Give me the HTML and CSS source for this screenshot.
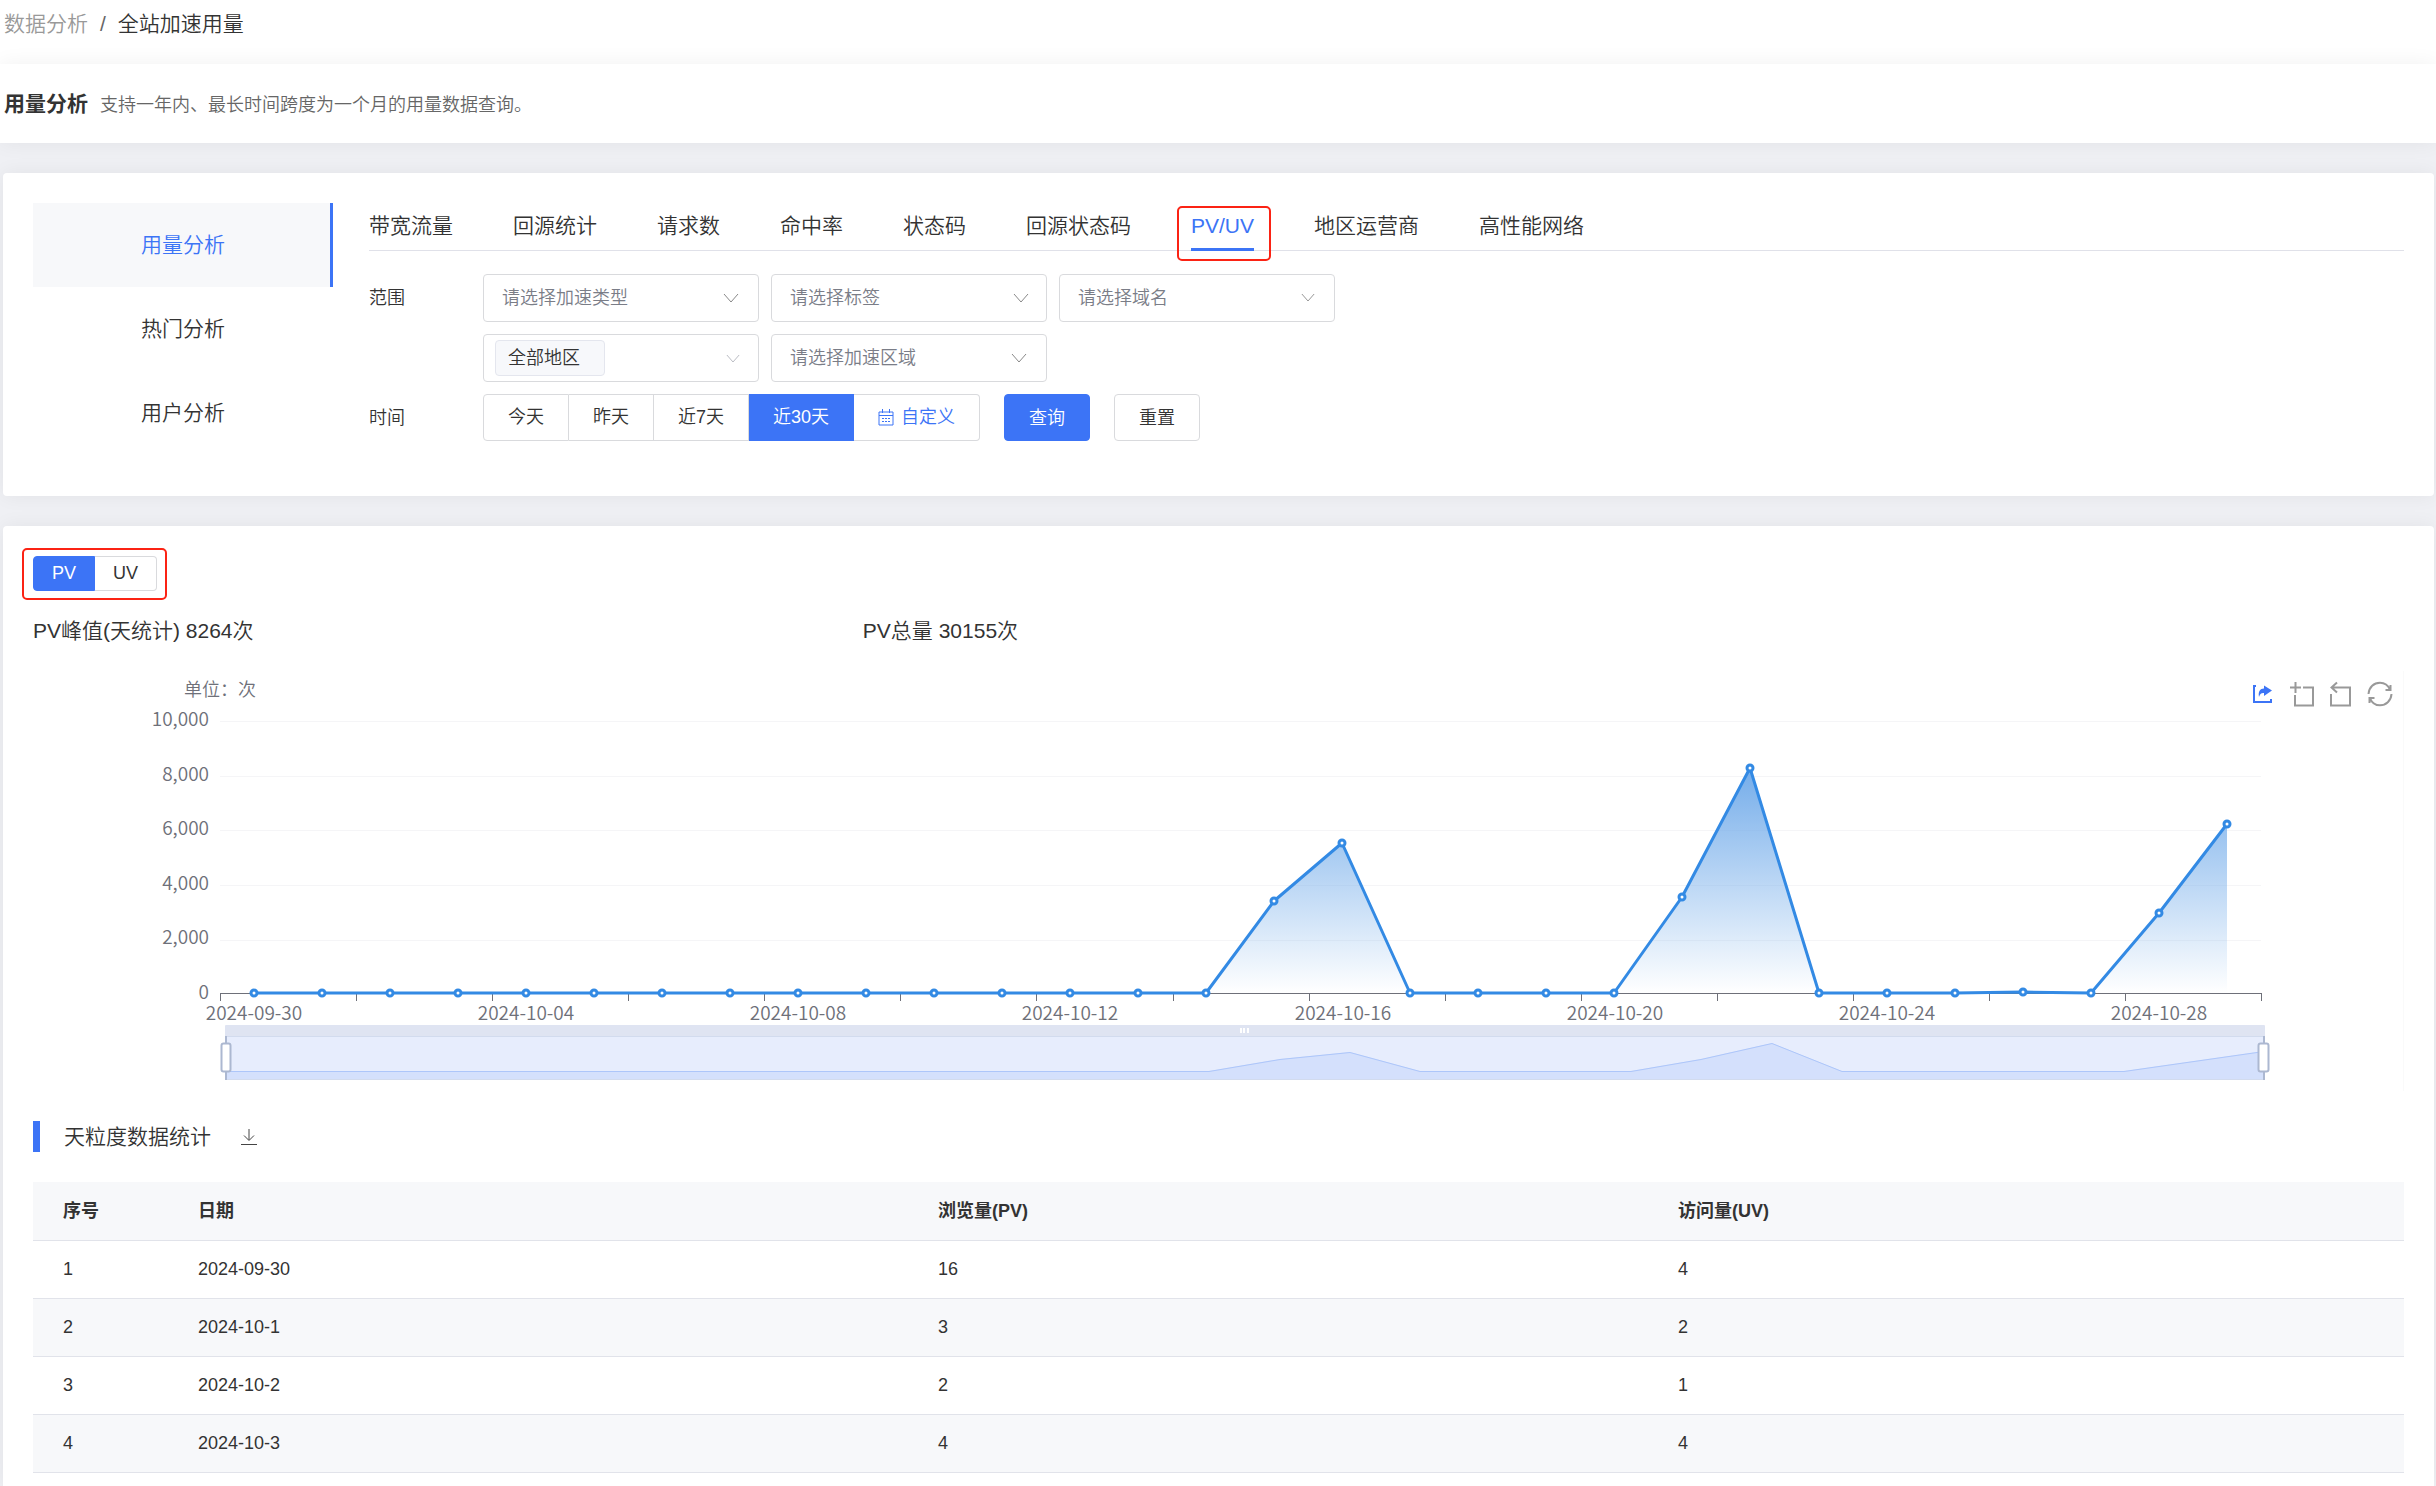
FILE: index.html
```html
<!DOCTYPE html>
<html lang="zh-CN">
<head>
<meta charset="utf-8">
<meta name="viewport" content="width=device-width, initial-scale=1">
<title>全站加速用量</title>
<link rel="stylesheet" href="styles.css">
</head>
<body>
<nav class="breadcrumb" aria-label="面包屑">
  <a href="#">数据分析</a><span class="breadcrumb-sep">/</span><span>全站加速用量</span>
</nav>
<header class="page-head">
  <h1>用量分析</h1>
  <p>支持一年内、最长时间跨度为一个月的用量数据查询。</p>
</header>
<main class="page">
  <section class="card query">
    <nav class="side-menu">
      <a class="side-item is-active" href="#">用量分析</a>
      <a class="side-item" href="#">热门分析</a>
      <a class="side-item" href="#">用户分析</a>
    </nav>
    <div class="query-body">
      <nav class="tabs">
        <a class="tab" href="#">带宽流量</a>
        <a class="tab" href="#">回源统计</a>
        <a class="tab" href="#">请求数</a>
        <a class="tab" href="#">命中率</a>
        <a class="tab" href="#">状态码</a>
        <a class="tab" href="#">回源状态码</a>
        <a class="tab is-active" href="#">PV/UV</a>
        <a class="tab" href="#">地区运营商</a>
        <a class="tab" href="#">高性能网络</a>
      </nav>
      <form class="filters">
        <div class="filter-row">
          <label class="filter-label" for="type">范围</label>
          <div class="field">
            <select id="type"><option>请选择加速类型</option></select>
            <svg class="chevron" viewBox="0 0 16 10"><path d="M1 1l7 8 7-8"/></svg>
          </div>
          <div class="field">
            <select aria-label="标签"><option>请选择标签</option></select>
            <svg class="chevron chevron-end" viewBox="0 0 16 10"><path d="M1 1l7 8 7-8"/></svg>
          </div>
          <div class="field">
            <select aria-label="域名"><option>请选择域名</option></select>
            <svg class="chevron chevron-small" viewBox="0 0 16 10"><path d="M1 1l7 8 7-8"/></svg>
          </div>
        </div>
        <div class="filter-row">
          <span class="filter-label"></span>
          <button class="field field-tags" type="button">
            <span class="tag">全部地区</span>
            <svg class="chevron chevron-small chevron-muted" viewBox="0 0 16 10"><path d="M1 1l7 8 7-8"/></svg>
          </button>
          <div class="field">
            <select aria-label="加速区域"><option>请选择加速区域</option></select>
            <svg class="chevron" viewBox="0 0 16 10"><path d="M1 1l7 8 7-8"/></svg>
          </div>
        </div>
        <div class="filter-row">
          <span class="filter-label">时间</span>
          <div class="segmented">
            <label><input type="radio" name="range">今天</label>
            <label><input type="radio" name="range">昨天</label>
            <label><input type="radio" name="range">近7天</label>
            <label><input type="radio" name="range" checked>近30天</label>
            <label class="custom"><input type="radio" name="range"><svg class="calendar" viewBox="0 0 16 17"><path d="M1 3h14v13H1zM1 6.500h14M4.500 0v4M11.500 0v4"/><path d="M4 9.500h2M7 9.500h2M10 9.500h2M4 12.500h2M7 12.500h2M10 12.500h2"/></svg>自定义</label>
          </div>
          <div class="actions">
            <button class="btn btn-primary" type="button">查询</button>
            <button class="btn" type="button">重置</button>
          </div>
        </div>
      </form>
    </div>
  </section>

  <section class="card report">
    <div class="segmented segmented-small">
      <label><input type="radio" name="metric" checked>PV</label>
      <label><input type="radio" name="metric">UV</label>
    </div>
    <div class="stats">
      <p>PV峰值(天统计) 8264次</p>
      <p>PV总量 30155次</p>
    </div>
    <div class="chart">
      <svg class="chart-plot" viewBox="0 0 2370 420" role="img" aria-label="PV 趋势图">
        <defs>
          <linearGradient id="area" gradientUnits="userSpaceOnUse" x1="0" y1="98" x2="0" y2="322">
            <stop offset="0" stop-color="#75adea"/><stop offset="1" stop-color="#75adea" stop-opacity="0"/>
          </linearGradient>
          <g id="dot"><circle r="3"/></g>
        </defs>
        <g class="axis-text">
          <text class="unit" x="151" y="25">单位：次</text>
          <g text-anchor="end">
            <text x="176" y="55">10,000</text>
            <text x="176" y="110">8,000</text>
            <text x="176" y="164">6,000</text>
            <text x="176" y="219">4,000</text>
            <text x="176" y="273">2,000</text>
            <text x="176" y="328">0</text>
          </g>
          <g text-anchor="middle">
            <text x="221" y="349">2024-09-30</text>
            <text x="493" y="349">2024-10-04</text>
            <text x="765" y="349">2024-10-08</text>
            <text x="1037" y="349">2024-10-12</text>
            <text x="1310" y="349">2024-10-16</text>
            <text x="1582" y="349">2024-10-20</text>
            <text x="1854" y="349">2024-10-24</text>
            <text x="2126" y="349">2024-10-28</text>
          </g>
        </g>
        <path class="grid" d="M187 50.500H2228M187 105.500H2228M187 159.500H2228M187 214.500H2228M187 269.500H2228"/>
        <path class="axis" d="M187 322.500H2229M187.500 323v7M323.500 323v7M459.500 323v7M595.500 323v7M731.500 323v7M867.500 323v7M1003.500 323v7M1140.500 323v7M1276.500 323v7M1412.500 323v7M1548.500 323v7M1684.500 323v7M1820.500 323v7M1956.500 323v7M2092.500 323v7M2228.500 323v7"/>
        <path fill="url(#area)" d="M1173 322L1241 230L1309 172L1377 322zM1581 322L1649 226L1717 97L1786 322zM2058 322L2126 242L2194 153V322z"/>
        <path class="line" d="M221 322H1173L1241 230L1309 172L1377 322H1581L1649 226L1717 97L1786 322H1922L1990 321L2058 322L2126 242L2194 153"/>
        <g class="dots">
          <use href="#dot" x="221" y="322"/><use href="#dot" x="289" y="322"/><use href="#dot" x="357" y="322"/><use href="#dot" x="425" y="322"/><use href="#dot" x="493" y="322"/><use href="#dot" x="561" y="322"/><use href="#dot" x="629" y="322"/><use href="#dot" x="697" y="322"/><use href="#dot" x="765" y="322"/><use href="#dot" x="833" y="322"/>
          <use href="#dot" x="901" y="322"/><use href="#dot" x="969" y="322"/><use href="#dot" x="1037" y="322"/><use href="#dot" x="1105" y="322"/><use href="#dot" x="1173" y="322"/><use href="#dot" x="1241" y="230"/><use href="#dot" x="1309" y="172"/><use href="#dot" x="1377" y="322"/><use href="#dot" x="1445" y="322"/><use href="#dot" x="1513" y="322"/>
          <use href="#dot" x="1581" y="322"/><use href="#dot" x="1649" y="226"/><use href="#dot" x="1717" y="97"/><use href="#dot" x="1786" y="322"/><use href="#dot" x="1854" y="322"/><use href="#dot" x="1922" y="322"/><use href="#dot" x="1990" y="321"/><use href="#dot" x="2058" y="322"/><use href="#dot" x="2126" y="242"/><use href="#dot" x="2194" y="153"/>
        </g>
        <g class="zoom-bar">
          <rect x="192" y="354" width="2040" height="12" rx="1" fill="#dfe4f2"/>
          <rect x="192" y="365" width="2040" height="44" fill="#e7edfd"/>
          <path fill="#d4e0fc" d="M192 409V400H1176L1247 388L1317 381L1387 400H1598L1668 388L1739 372L1809 400H2091L2161 390L2231 380V409z"/>
          <path fill="none" stroke="#adc6fa" d="M192 400.500H1176L1247 388.500L1317 381.500L1387 400.500H1598L1668 388.500L1739 372.500L1809 400.500H2091L2161 390.500L2231 380.500"/>
          <path fill="none" stroke="#d2dbee" d="M192 365.500H2232M192 408.500H2232"/>
          <path fill="none" stroke="#fff" stroke-width="2" d="M1208 357v5M1211 357v5M1215 357v5"/>
          <path fill="none" stroke="#acb8d1" stroke-width="2" d="M193 365v44M2231 365v44"/>
          <rect class="grip" x="188.500" y="372.500" width="9" height="28" rx="2"/>
          <rect class="grip" x="2225.500" y="372.500" width="10" height="28" rx="2"/>
        </g>
      </svg>
      <div class="toolbox">
        <button type="button" class="tool tool-active" aria-label="导出"><svg viewBox="0 0 24 24"><path class="stroke" d="M5 4H3v16h17v-3"/><path class="solid" d="M13 3.500l8 5-8 5.500v-3c-3-.3-4 1-5 4C7 9.500 9 6.500 13 6.500z"/></svg></button>
        <button type="button" class="tool" aria-label="区域缩放"><svg viewBox="0 0 24 24"><path d="M0 5.500h11M5.500 0v11M13 5.500h10v18H5V13"/></svg></button>
        <button type="button" class="tool" aria-label="缩放还原"><svg viewBox="0 0 24 24"><path d="M8 .500L2.500 5.500l5.500 5M3 5.500h18v18H2V12"/></svg></button>
        <button type="button" class="tool" aria-label="刷新"><svg viewBox="0 0 24 24"><path d="M.500 12C1 5 6 .700 12 .700c4.500 0 8 2.300 10 7M22.500 3v5h-5M23.500 12c-.5 7-5.500 11.300-11.500 11.300-4.500 0-8-2.300-10-7M1.500 21v-5h5"/></svg></button>
      </div>
    </div>
    <div class="section-head">
      <h2>天粒度数据统计</h2>
      <button type="button" class="download" aria-label="下载"><svg viewBox="0 0 16 16"><path d="M8 0v11M3 6.500l5 5 5-5M0 15.500h16"/></svg></button>
    </div>
    <table class="data">
      <colgroup><col class="col-index"><col class="col-date"><col class="col-pv"><col></colgroup>
      <thead><tr><th>序号</th><th>日期</th><th>浏览量(PV)</th><th>访问量(UV)</th></tr></thead>
      <tbody>
        <tr><td>1</td><td>2024-09-30</td><td>16</td><td>4</td></tr>
        <tr><td>2</td><td>2024-10-1</td><td>3</td><td>2</td></tr>
        <tr><td>3</td><td>2024-10-2</td><td>2</td><td>1</td></tr>
        <tr><td>4</td><td>2024-10-3</td><td>4</td><td>4</td></tr>
      </tbody>
    </table>
  </section>
</main>
</body>
</html>
```
FILE: styles.css
```css
:root {
  --blue: #3c74f6;
  --ink: #333;
  --muted: #7a7d87;
  --border: #d9dadd;
  --mark: #fb2314;
}
* { box-sizing: border-box; }
html, body { height: 100%; }
body {
  margin: 0;
  display: flex;
  flex-direction: column;
  background: #eff0f4;
  color: var(--ink);
  font: 350 18px/24px "Liberation Sans", "Noto Sans CJK SC", sans-serif;
}
h1, h2, p { margin: 0; font-weight: inherit; }
a { color: inherit; text-decoration: none; }
button, select { font: inherit; color: inherit; }
svg { display: block; fill: none; stroke: currentColor; }

.breadcrumb {
  padding: 8px 4px 24px;
  background: #fff;
  font-size: 21px;
  line-height: 32px;
}
.breadcrumb a { color: #999; }
.breadcrumb-sep { margin: 0 12px; color: #666; }

.page-head {
  display: flex;
  gap: 12px;
  align-items: baseline;
  padding: 20px 4px 18px;
  background: #fff;
  line-height: 39px;
  box-shadow: 0 0 20px rgba(0, 0, 0, .06);
}
.page-head h1 { font-size: 21px; font-weight: bold; }
.page-head p { color: #666; }

.page {
  flex: 1 0 auto;
  display: flex;
  flex-direction: column;
  gap: 30px;
  padding: 30px 2px 0 3px;
}
.card {
  padding: 30px;
  background: #fff;
  border-radius: 4px;
  box-shadow: 0 0 20px rgba(0, 0, 0, .06);
}

.query { display: flex; gap: 36px; padding-bottom: 41px; }
.side-menu { flex: none; width: 300px; }
.side-item {
  display: block;
  font-size: 21px;
  line-height: 84px;
  text-align: center;
}
.side-item.is-active {
  background: #f7f8fa;
  box-shadow: inset -3px 0 var(--blue);
  color: var(--blue);
}
.query-body { flex: 1; min-width: 0; }
.tabs {
  display: flex;
  gap: 60px;
  border-bottom: 1px solid #e0e1e9;
  font-size: 21px;
  line-height: 46px;
}
.tab {
  position: relative;
  height: 48px;
  margin-bottom: -1px;
  border-bottom: 3px solid transparent;
}
.tab.is-active { border-color: var(--blue); color: var(--blue); }
.tab.is-active::after {
  content: "";
  position: absolute;
  inset: 3px -17px -13px -14px;
  border: 2px solid var(--mark);
  border-radius: 5px;
}

.filters { display: grid; gap: 12px; margin-top: 23px; }
.filter-row { display: flex; gap: 12px; align-items: center; }
.filter-label { width: 102px; }
.field { position: relative; width: 276px; height: 48px; }
.field select, .field-tags {
  padding: 0 18px;
  border: 1px solid var(--border);
  border-radius: 4px;
  background: #fff;
}
.field select {
  width: 100%;
  height: 100%;
  appearance: none;
  color: var(--muted);
}
.field-tags { display: flex; align-items: center; padding: 0 11px; }
.tag {
  padding: 0 24px 0 12px;
  border: 1px solid #e4e6ee;
  border-radius: 4px;
  background: #f7f8fb;
  line-height: 34px;
}
.chevron {
  position: absolute;
  top: 19px;
  right: 20px;
  width: 16px;
  height: 10px;
  color: #888;
  pointer-events: none;
}
.chevron-end { right: 18px; }
.chevron-small { width: 14px; height: 9px; }
.chevron-muted { right: 18px; color: #b0b2ba; }

.segmented { position: relative; display: flex; }
.segmented label {
  height: 47px;
  padding: 0 24px;
  border: 1px solid var(--border);
  border-left-width: 0;
  line-height: 45px;
}
.segmented label:first-child { border-left-width: 1px; border-radius: 4px 0 0 4px; }
.segmented label:last-child { border-radius: 0 4px 4px 0; }
.segmented input { position: absolute; opacity: 0; pointer-events: none; }
.segmented label:has(:checked) {
  border-color: var(--blue);
  background: var(--blue);
  color: #fff;
}
.segmented .custom { display: flex; align-items: center; gap: 7px; color: var(--blue); }
.calendar { width: 16px; height: 17px; }

.actions { display: flex; gap: 24px; margin-left: 12px; }
.btn {
  height: 47px;
  padding: 0 24px;
  border: 1px solid var(--border);
  border-radius: 4px;
  background: #fff;
}
.btn-primary { border-color: var(--blue); background: var(--blue); color: #fff; }

.report { flex: 1 0 auto; border-radius: 4px 4px 0 0; padding-bottom: 14px; }
.segmented-small { width: max-content; }
.segmented-small label { height: 35px; padding: 0 18px; line-height: 33px; }
.segmented-small::after {
  content: "";
  position: absolute;
  inset: -8px -10px -9px -11px;
  border: 2px solid var(--mark);
  border-radius: 5px;
  pointer-events: none;
}
.stats {
  display: grid;
  grid-template-columns: 35% 1fr;
  margin: 24px 0;
  font-size: 21px;
  line-height: 32px;
}

.chart { position: relative; border-right: 1px solid #fafafa; }
.chart-plot { width: 100%; height: auto; }
.axis-text {
  fill: #6e7079;
  stroke: none;
  font: 350 19px "Noto Sans CJK SC", sans-serif;
}
.unit { font-size: 18px; }
.grid { stroke: #f5f5f7; }
.axis { stroke: #6e7079; }
.chart-plot [fill^="url"] { stroke: none; }
.line { stroke: #338ae4; stroke-width: 3; stroke-linejoin: round; }
.dots { fill: #fff; stroke: #338ae4; stroke-width: 3; }
.zoom-bar { stroke: none; }
.grip { fill: #fff; stroke: #acb8d1; stroke-width: 2; }
.toolbox {
  position: absolute;
  top: 11px;
  right: 11px;
  display: flex;
  gap: 15px;
}
.tool {
  width: 24px;
  height: 24px;
  padding: 0;
  border: 0;
  background: none;
  color: #999;
}
.tool svg { width: 24px; height: 24px; stroke-width: 2; overflow: visible; }
.tool-active { color: var(--blue); }
.solid { fill: currentColor; stroke: none; }

.section-head { display: flex; align-items: center; margin: 30px 0; }
.section-head h2 {
  padding-left: 24px;
  border-left: 7px solid var(--blue);
  font-size: 21px;
  line-height: 31px;
}
.download {
  margin-left: 30px;
  padding: 0;
  border: 0;
  background: none;
  color: #444;
}
.download svg { width: 16px; height: 16px; }

.data { width: 100%; border-collapse: collapse; table-layout: fixed; }
.col-index { width: 135px; }
.col-date, .col-pv { width: 740px; }
.data th, .data td {
  height: 58px;
  padding: 0 30px;
  border-bottom: 1px solid #e1e3ea;
  text-align: left;
}
.data thead, .data tbody tr:nth-child(even) { background: #f7f8fa; }
```
